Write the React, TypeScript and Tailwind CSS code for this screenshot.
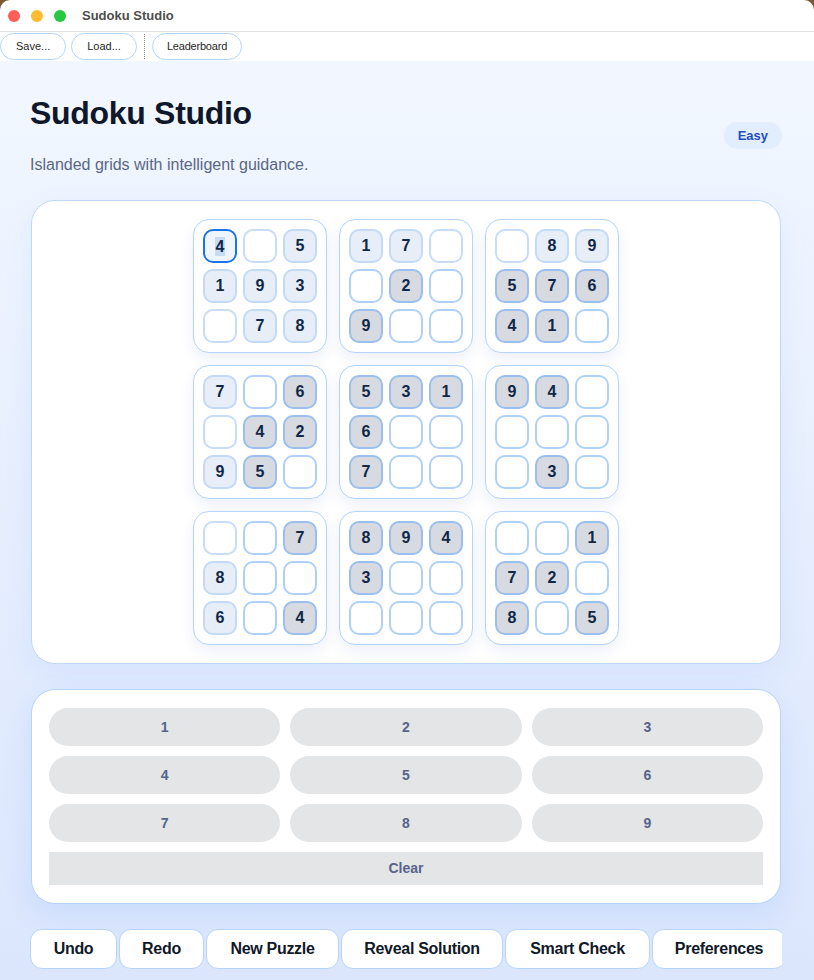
import React from "react";

type Kind = "sel" | "hl" | "dark" | "empty" | "hlEmpty";
type Cell = { v: string; k: Kind };

// each box: 9 cells, row-major. "" = empty
const raw: Array<Array<[string, Kind]>> = [
  [["4", "sel"], ["", "hlEmpty"], ["5", "hl"], ["1", "hl"], ["9", "hl"], ["3", "hl"], ["", "hlEmpty"], ["7", "hl"], ["8", "hl"]],
  [["1", "hl"], ["7", "hl"], ["", "hlEmpty"], ["", "empty"], ["2", "dark"], ["", "empty"], ["9", "dark"], ["", "empty"], ["", "empty"]],
  [["", "hlEmpty"], ["8", "hl"], ["9", "hl"], ["5", "dark"], ["7", "dark"], ["6", "dark"], ["4", "dark"], ["1", "dark"], ["", "empty"]],
  [["7", "hl"], ["", "empty"], ["6", "dark"], ["", "hlEmpty"], ["4", "dark"], ["2", "dark"], ["9", "hl"], ["5", "dark"], ["", "empty"]],
  [["5", "dark"], ["3", "dark"], ["1", "dark"], ["6", "dark"], ["", "empty"], ["", "empty"], ["7", "dark"], ["", "empty"], ["", "empty"]],
  [["9", "dark"], ["4", "dark"], ["", "empty"], ["", "empty"], ["", "empty"], ["", "empty"], ["", "empty"], ["3", "dark"], ["", "empty"]],
  [["", "hlEmpty"], ["", "empty"], ["7", "dark"], ["8", "hl"], ["", "empty"], ["", "empty"], ["6", "hl"], ["", "empty"], ["4", "dark"]],
  [["8", "dark"], ["9", "dark"], ["4", "dark"], ["3", "dark"], ["", "empty"], ["", "empty"], ["", "empty"], ["", "empty"], ["", "empty"]],
  [["", "empty"], ["", "empty"], ["1", "dark"], ["7", "dark"], ["2", "dark"], ["", "empty"], ["8", "dark"], ["", "empty"], ["5", "dark"]],
];

const boxes: Cell[][] = raw.map((b) => b.map(([v, k]) => ({ v, k })));

const cellStyle: Record<Kind, string> = {
  sel: "bg-[#eff5ff] border-[#1a73e8]",
  hl: "bg-[#e8eef7] border-[#c3daf6]",
  hlEmpty: "bg-white border-[#c6dcf7]",
  dark: "bg-[#d7dae1] border-[#9abfee]",
  empty: "bg-white border-[#b0d0f7]",
};

function SudokuCell({ cell }: { cell: Cell }) {
  return (
    <div
      className={`w-[34px] h-[34px] rounded-[10px] border-2 flex items-center justify-center text-[16px] font-bold text-[#0f2847] ${cellStyle[cell.k]}`}
    >
      {cell.k === "sel" ? (
        <span className="bg-[#c6dbf6] px-[1px] leading-[19px]">{cell.v}</span>
      ) : (
        cell.v
      )}
    </div>
  );
}

const pads = ["1", "2", "3", "4", "5", "6", "7", "8", "9"];
const actions = [
  { label: "Undo", w: "w-[87px]" },
  { label: "Redo", w: "w-[85px]" },
  { label: "New Puzzle", w: "w-[133px]" },
  { label: "Reveal Solution", w: "w-[162px]" },
  { label: "Smart Check", w: "w-[145px]" },
  { label: "Preferences", w: "w-[134px]" },
];

export default function App() {
  return (
    <div
      className="w-[814px] h-[980px] overflow-hidden bg-[#7a5a32]"
      style={{ fontFamily: '"Liberation Sans", Arial, sans-serif' }}
    >
      <div className="h-full rounded-t-[10px] overflow-hidden bg-white flex flex-col">
        {/* Title bar */}
        <div className="h-[32px] shrink-0 flex items-center border-b border-[#e3e3e3]">
          <div className="flex items-center gap-[11px] pl-[8px]">
            <span className="w-[12px] h-[12px] rounded-full bg-[#ff5f57]" />
            <span className="w-[12px] h-[12px] rounded-full bg-[#febc2e]" />
            <span className="w-[12px] h-[12px] rounded-full bg-[#28c840]" />
          </div>
          <span className="ml-[16px] text-[13px] font-bold text-[#4d4d4d]">Sudoku Studio</span>
        </div>

        {/* Toolbar */}
        <div className="h-[29px] shrink-0 flex items-center">
          <button className="h-[27px] px-[15px] rounded-full border border-[#b4d3f8] bg-white text-[11px] text-[#1f1f1f]">
            Save...
          </button>
          <button className="ml-[5px] h-[27px] px-[15px] rounded-full border border-[#b4d3f8] bg-white text-[11px] text-[#1f1f1f]">
            Load...
          </button>
          <div className="mx-[7px] h-[25px] border-l border-dotted border-[#8a8a8a]" />
          <button className="h-[27px] px-[14px] rounded-full border border-[#b4d3f8] bg-white text-[11px] text-[#1f1f1f] tracking-[-0.2px]">
            Leaderboard
          </button>
        </div>

        {/* Main */}
        <div className="flex-1 bg-gradient-to-b from-[#f2f7ff] to-[#dbe6fd] px-[31px] pt-[33px]">
          <div className="flex items-center justify-between">
            <div>
              <h1 className="text-[32px] leading-[38px] font-bold text-[#0f172a] tracking-[-0.3px] -ml-px">
                Sudoku Studio
              </h1>
              <p className="mt-[21px] text-[16px] leading-[24px] text-[#5a6785] -ml-px">
                Islanded grids with intelligent guidance.
              </p>
            </div>
            <span className="h-[27px] px-[14px] mr-[1px] rounded-full bg-[#e2edfd] text-[13px] font-bold text-[#1e4fc0] flex items-center">
              Easy
            </span>
          </div>

          {/* Board */}
          <div className="mt-[23px] w-[750px] rounded-[24px] border border-[#bcd8fb] bg-white py-[18px] flex justify-center shadow-[0_10px_30px_rgba(59,130,246,0.08)]">
            <div className="grid grid-cols-3 gap-[12px]">
              {boxes.map((box, i) => (
                <div
                  key={i}
                  className="w-[134px] h-[134px] rounded-[16px] border border-[#b5d4fa] bg-white p-[9px] grid grid-cols-3 gap-[6px] shadow-[0_6px_14px_rgba(30,64,175,0.08)]"
                >
                  {box.map((c, j) => (
                    <SudokuCell key={j} cell={c} />
                  ))}
                </div>
              ))}
            </div>
          </div>

          {/* Number pad */}
          <div className="mt-[25px] w-[750px] rounded-[24px] border border-[#b5d4fa] bg-white px-[17px] py-[18px] shadow-[0_10px_30px_rgba(59,130,246,0.12)]">
            <div className="grid grid-cols-3 gap-[10px]">
              {pads.map((n) => (
                <button
                  key={n}
                  className="h-[38px] rounded-full bg-[#e4e5e7] text-[14px] font-bold text-[#56648a]"
                >
                  {n}
                </button>
              ))}
              <button className="col-span-3 h-[33px] bg-[#e4e5e7] text-[14px] font-bold text-[#56648a]">
                Clear
              </button>
            </div>
          </div>

          {/* Actions */}
          <div className="mt-[25px] w-[752px] -ml-px flex gap-[2px] overflow-hidden">
            {actions.map((a) => (
              <button
                key={a.label}
                className={`shrink-0 h-[40px] ${a.w} rounded-[12px] border border-[#b5d4fa] bg-white text-[16px] font-bold text-[#111827] tracking-[-0.3px]`}
              >
                {a.label}
              </button>
            ))}
          </div>
        </div>
      </div>
    </div>
  );
}
